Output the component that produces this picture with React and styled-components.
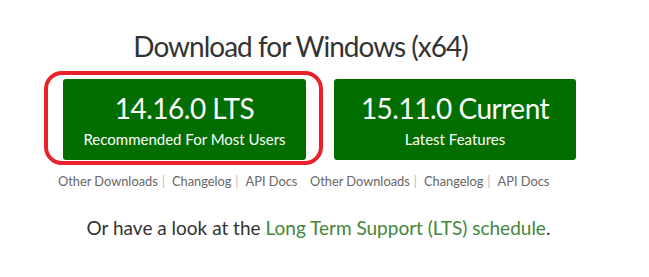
import React from "react";
import styled, { createGlobalStyle } from "styled-components";

const Global = createGlobalStyle`
  html, body { margin: 0; padding: 0; background: #fff; }
  body { font-family: Lato, "Noto Sans", sans-serif; color: #333; }
`;

const Page = styled.main`
  width: 649px;
  height: 277px;
  box-sizing: border-box;
  padding-top: 28px;
  display: flex;
  flex-direction: column;
  align-items: center;
`;

const Title = styled.h1`
  margin: 0 48px 0 0;
  font-weight: 400;
  font-size: 28px;
  letter-spacing: -1px;
  line-height: 36px;
  color: #333;
`;

const Blocks = styled.div`
  margin-top: 15px;
  margin-left: -10px;
  display: flex;
  gap: 28px;
`;

const Block = styled.div`
  display: flex;
  flex-direction: column;
  align-items: flex-start;
`;

const Highlight = styled.div`
  position: relative;
  border-radius: 6px;
  &::before {
    content: "";
    position: absolute;
    left: -19px;
    right: -17px;
    top: -8px;
    bottom: -5px;
    border: 4px solid #e8212b;
    border-radius: 18px;
    pointer-events: none;
  }
`;

const Button = styled.a`
  display: flex;
  flex-direction: column;
  align-items: center;
  box-sizing: border-box;
  width: ${(p) => p.$w}px;
  height: 81px;
  padding-top: 12px;
  background: #026e00;
  border-radius: 3px;
  color: #fff;
  text-decoration: none;
`;

const Version = styled.span`
  font-size: 28px;
  letter-spacing: -0.5px;
  line-height: 34px;
`;

const Sub = styled.span`
  margin-top: 5px;
  font-size: 15px;
  line-height: 18px;
`;

const Links = styled.div`
  margin-top: 12px;
  margin-left: ${(p) => p.$shift}px;
  font-size: 12.8px;
  line-height: 18px;
  white-space: nowrap;
`;

const Link = styled.a`
  color: #666;
  text-decoration: none;
`;

const Sep = styled.span`
  color: #c9b5b5;
  margin: 0 7px 0 4px;
`;

const Note = styled.p`
  margin: 26px 0 0 -12px;
  font-size: 19px;
  line-height: 24px;
  color: #333;
`;

const Green = styled.a`
  color: #43853d;
  text-decoration: none;
`;

function DownloadLinks({ shift }) {
  return (
    <Links $shift={shift}>
      <Link>Other Downloads</Link>
      <Sep>|</Sep>
      <Link>Changelog</Link>
      <Sep>|</Sep>
      <Link>API Docs</Link>
    </Links>
  );
}

export default function App() {
  return (
    <>
      <Global />
      <Page>
        <Title>Download for Windows (x64)</Title>
        <Blocks>
          <Block>
            <Highlight>
              <Button $w={243}>
                <Version>14.16.0 LTS</Version>
                <Sub>Recommended For Most Users</Sub>
              </Button>
            </Highlight>
            <DownloadLinks shift={-5} />
          </Block>
          <Block>
            <Button $w={242}>
              <Version>15.11.0 Current</Version>
              <Sub>Latest Features</Sub>
            </Button>
            <DownloadLinks shift={-24} />
          </Block>
        </Blocks>
        <Note>
          Or have a look at the <Green>Long Term Support (LTS) schedule</Green>.
        </Note>
      </Page>
    </>
  );
}
